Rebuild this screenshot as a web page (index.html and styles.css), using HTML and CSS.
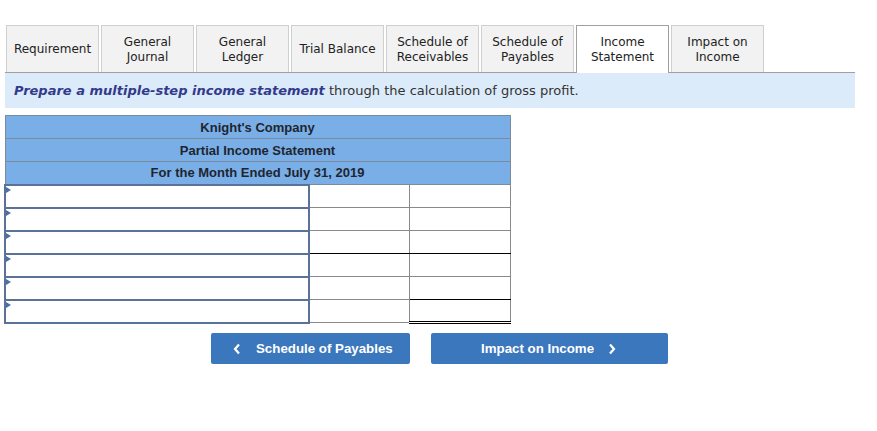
FILE: index.html
```html
<!DOCTYPE html>
<html>
<head>
<meta charset="utf-8">
<link rel="stylesheet" href="styles.css">
</head>
<body>
<div class="page">
  <div class="tabs">
    <div class="tab">Requirement</div>
    <div class="tab">General<br>Journal</div>
    <div class="tab">General<br>Ledger</div>
    <div class="tab">Trial Balance</div>
    <div class="tab">Schedule of<br>Receivables</div>
    <div class="tab">Schedule of<br>Payables</div>
    <div class="tab active">Income<br>Statement</div>
    <div class="tab">Impact on<br>Income</div>
  </div>
  <div class="instruction"><b><i>Prepare a multiple-step income statement</i></b> through the calculation of gross profit.</div>
  <table class="stmt">
    <colgroup><col class="c1"><col class="c2"><col class="c3"></colgroup>
    <tr class="head"><th colspan="3">Knight's Company</th></tr>
    <tr class="head"><th colspan="3">Partial Income Statement</th></tr>
    <tr class="head"><th colspan="3">For the Month Ended July 31, 2019</th></tr>
    <tr><td class="lbl"><span class="mark"></span></td><td></td><td></td></tr>
    <tr><td class="lbl"><span class="mark"></span></td><td></td><td></td></tr>
    <tr class="total"><td class="lbl"><span class="mark"></span></td><td></td><td></td></tr>
    <tr><td class="lbl"><span class="mark"></span></td><td></td><td></td></tr>
    <tr class="sub3"><td class="lbl"><span class="mark"></span></td><td></td><td></td></tr>
    <tr class="last"><td class="lbl"><span class="mark"></span></td><td></td><td class="dbl"></td></tr>
  </table>
  <div class="nav">
    <button class="btn prev"><svg class="chev" width="8" height="12" viewBox="0 0 8 12"><polyline points="6,1.5 2,6 6,10.5" fill="none" stroke="#fff" stroke-width="2.2"/></svg>Schedule of Payables</button>
    <button class="btn next">Impact on Income<svg class="chev" width="8" height="12" viewBox="0 0 8 12"><polyline points="2,1.5 6,6 2,10.5" fill="none" stroke="#fff" stroke-width="2.2"/></svg></button>
  </div>
</div>
</body>
</html>
```

FILE: styles.css
```css
* { box-sizing: border-box; }
html, body { margin: 0; padding: 0; background: #fff; }
.page {
  padding: 25px 0 0 5px;
  font-family: "DejaVu Sans", Verdana, sans-serif;
  color: #222;
}
.tabs {
  display: flex;
  gap: 2px;
  width: 850px;
  padding-left: 1px;
  border-bottom: 1px solid #a0a0a0;
  height: 48px;
}
.tab {
  width: 93px;
  height: 47px;
  background: #f2f2f2;
  border: 1px solid #cfcfcf;
  border-bottom: none;
  font-size: 12px;
  line-height: 15px;
  padding-top: 1px;
  text-align: center;
  display: flex;
  align-items: center;
  justify-content: center;
  color: #222;
}
.tab.active {
  background: #fff;
  border-color: #a0a0a0;
  height: 48px;
  position: relative;
  z-index: 1;
}
.instruction {
  width: 850px;
  height: 35px;
  line-height: 36px;
  background: #dcebf9;
  font-size: 13px;
  padding-left: 9px;
  color: #333;
}
.instruction b { color: #333a8c; }
.stmt {
  margin-top: 7px;
  margin-left: -1px;
  border-collapse: collapse;
  width: 505px;
  table-layout: fixed;
  font-family: "Liberation Sans", Arial, sans-serif;
}
.c1 { width: 304px; }
.c2 { width: 100px; }
.c3 { width: 101px; }
.head th {
  background: #7aaee6;
  border: 1px solid #7a8ba0;
  height: 23px;
  font-size: 13px;
  font-weight: bold;
  color: #1e2530;
  padding: 0;
}
td {
  height: 23px;
  border: 1px solid #8a8a8a;
  padding: 0;
}
td.lbl {
  border: 2px solid #5a7297;
  position: relative;
}
.mark {
  position: absolute;
  left: 0;
  top: 1px;
  width: 0;
  height: 0;
  border-left: 5px solid #4a6ea6;
  border-top: 3px solid transparent;
  border-bottom: 3px solid transparent;
}
.total td:not(.lbl) { border-bottom: 1px solid #000; }
.sub3 td:nth-child(3) { border-bottom: 1px solid #000; }
td.dbl { border-bottom: 3px double #000; }
.nav {
  display: flex;
  gap: 21px;
  margin-top: 9px;
  padding-left: 206px;
}
.btn {
  height: 31px;
  border: none;
  border-radius: 2px;
  background: #3b77bd;
  color: #fff;
  font-family: "Liberation Sans", Arial, sans-serif;
  font-weight: bold;
  font-size: 13.3px;
  display: flex;
  align-items: center;
  justify-content: flex-start;
  padding: 0;
}
.prev { width: 199px; padding-left: 22px; }
.next { width: 237px; padding-left: 50px; }
.chev { display: block; flex: none; }
.prev .chev { margin-right: 15px; }
.next .chev { margin-left: 14px; }
```
